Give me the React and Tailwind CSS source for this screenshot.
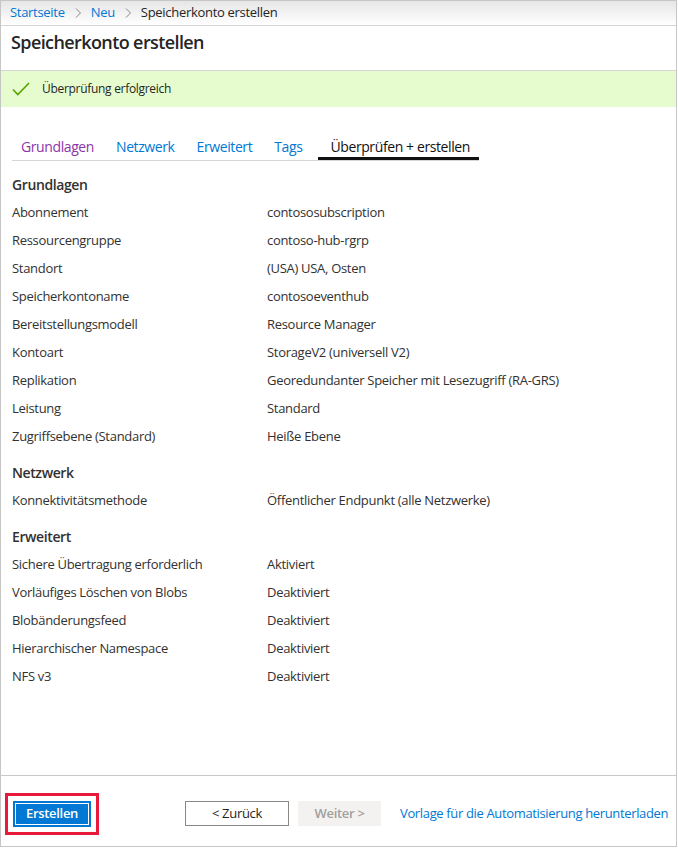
import React from 'react'

const font = { fontFamily: '"Segoe UI", "Open Sans", "Noto Sans", sans-serif' }

const sections = [
  {
    title: 'Grundlagen',
    rows: [
      ['Abonnement', 'contososubscription'],
      ['Ressourcengruppe', 'contoso-hub-rgrp'],
      ['Standort', '(USA) USA, Osten'],
      ['Speicherkontoname', 'contosoeventhub'],
      ['Bereitstellungsmodell', 'Resource Manager'],
      ['Kontoart', 'StorageV2 (universell V2)'],
      ['Replikation', 'Georedundanter Speicher mit Lesezugriff (RA-GRS)'],
      ['Leistung', 'Standard'],
      ['Zugriffsebene (Standard)', 'Heiße Ebene'],
    ],
  },
  {
    title: 'Netzwerk',
    rows: [['Konnektivitätsmethode', 'Öffentlicher Endpunkt (alle Netzwerke)']],
  },
  {
    title: 'Erweitert',
    rows: [
      ['Sichere Übertragung erforderlich', 'Aktiviert'],
      ['Vorläufiges Löschen von Blobs', 'Deaktiviert'],
      ['Blobänderungsfeed', 'Deaktiviert'],
      ['Hierarchischer Namespace', 'Deaktiviert'],
      ['NFS v3', 'Deaktiviert'],
    ],
  },
]

function Chevron() {
  return (
    <svg width="8" height="12" viewBox="0 0 8 12" className="mx-[9px]">
      <path d="M2 1.5 L6.5 6 L2 10.5" fill="none" stroke="#8a8886" strokeWidth="1" />
    </svg>
  )
}

function Breadcrumb() {
  return (
    <div className="h-[25px] flex items-center pl-[9px] border-b border-[#d4d4d4] bg-gradient-to-b from-[#e6e6e6] to-white text-[13px]">
      <span className="text-[#0078d4]">Startseite</span>
      <Chevron />
      <span className="text-[#0078d4]">Neu</span>
      <Chevron />
      <span className="text-[#252525]">Speicherkonto erstellen</span>
    </div>
  )
}

function Tabs() {
  const tabs = [
    { name: 'Grundlagen', cls: 'text-[#8a35a8]' },
    { name: 'Netzwerk', cls: 'text-[#0078d4]' },
    { name: 'Erweitert', cls: 'text-[#0078d4]' },
    { name: 'Tags', cls: 'text-[#0078d4]' },
  ]
  return (
    <div className="ml-[11px] mt-[26px] flex w-max border-b border-[#d6d6d6] text-[14px] tracking-[-0.4px]">
      {tabs.map((t, i) => (
        <div key={t.name} className={`h-[27px] flex items-center px-[11px] ${i === 0 ? 'pl-[9px]' : ''} ${t.cls}`}>
          {t.name}
        </div>
      ))}
      <div className="h-[27px] flex items-center ml-[5px] pl-[12px] pr-[9px] border-b-[3px] border-[#111] -mb-px text-[#111] pt-[2px]">
        Überprüfen + erstellen
      </div>
    </div>
  )
}

function Section({ title, rows, first }) {
  return (
    <div className={first ? 'mt-[9px]' : 'mt-2'}>
      <div className="h-[28px] flex items-center font-semibold text-[14px] text-[#323130] tracking-[-0.4px]">{title}</div>
      {rows.map(([k, v]) => (
        <div key={k} className="h-[28px] flex items-center pt-[2px] text-[13px] text-[#323130]">
          <div className="w-[255px] shrink-0">{k}</div>
          <div>{v}</div>
        </div>
      ))}
    </div>
  )
}

function Footer() {
  return (
    <div className="h-[71px] border-t border-[#c8c8c8] flex items-center pt-[5px] text-[13px]">
      <div className="ml-[4px] border-[3px] border-[#e81a3b] px-[5px] py-[5px]">
        <div className="w-[78px] h-[26px] bg-[#0078d4] flex items-center justify-center p-[2px]">
          <div className="w-full h-full border border-white flex items-center justify-center text-white font-semibold">
            Erstellen
          </div>
        </div>
      </div>
      <div className="ml-[86px] w-[104px] h-[25px] border border-[#8a8886] flex items-center justify-center text-[#252525]">
        &lt; Zurück
      </div>
      <div className="ml-[9px] w-[83px] h-[25px] bg-[#f3f2f1] flex items-center justify-center text-[#a19f9d] font-semibold">
        Weiter &gt;
      </div>
      <div className="ml-[19px] whitespace-nowrap tracking-[-0.35px] text-[#0078d4]">
        Vorlage für die Automatisierung herunterladen
      </div>
    </div>
  )
}

export default function App() {
  return (
    <div style={font} className="w-[678px] h-[848px] bg-white tracking-[-0.3px]">
      <div className="w-[677px] h-[847px] border border-[#c6c6c6] flex flex-col">
        <Breadcrumb />
        <div className="h-[45px] border-b border-[#d4d4d4] flex items-center pl-[10px] pb-[12px]">
          <h1 className="text-[18px] font-semibold text-[#252525] tracking-[-0.6px]">Speicherkonto erstellen</h1>
        </div>
        <div className="h-[36px] bg-[#e6fccf] flex items-center pl-[11px] text-[12px] text-[#252525]">
          <svg width="18" height="14" viewBox="0 0 18 14" className="mr-[12px]">
            <path d="M1 7.5 L5.8 12.5 L17 1" fill="none" stroke="#57a300" strokeWidth="1.6" />
          </svg>
          Überprüfung erfolgreich
        </div>
        <Tabs />
        <div className="flex-1 pl-[11px]">
          {sections.map((s, i) => (
            <Section key={s.title} title={s.title} rows={s.rows} first={i === 0} />
          ))}
        </div>
        <Footer />
      </div>
    </div>
  )
}
